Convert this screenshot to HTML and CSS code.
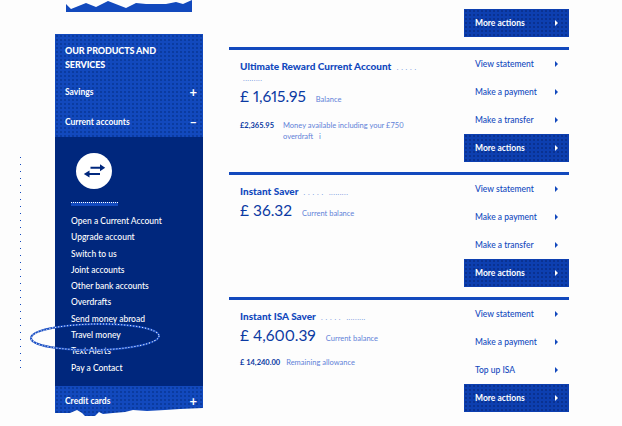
FILE: index.html
```html
<!DOCTYPE html>
<html lang="en">
<head>
<meta charset="utf-8">
<title>Your accounts</title>
<link rel="stylesheet" href="styles.css">
</head>
<body>
<div class="page">
  <div class="edge"></div>
  <aside class="side">
    <svg class="torn-top" viewBox="0 0 127 12" preserveAspectRatio="none"><path d="M1 4 L6 9 L21 3 L31 7 L43 1 L61 8 L71 3 L81 4 L101 4 L111 2 L118 4 L127 0 L127 12 L1 12 Z"/></svg>
    <nav class="menu">
      <h2 class="menu-title">OUR PRODUCTS AND SERVICES</h2>
      <div class="menu-row"><span>Savings</span><span class="sign">+</span></div>
      <div class="menu-row"><span>Current accounts</span><span class="sign">–</span></div>
      <div class="panel">
        <div class="disc">
          <svg viewBox="0 0 24 20" width="24" height="20"><path class="swap" d="M8.500 5.700H18V3.200L23.200 6.700L18 10.200V7.700H8.500Z M18 12H7.500V9.500L1.800 13L7.500 16.500V14H18Z"/></svg>
        </div>
        <div class="panel-name"></div>
        <ul class="links">
          <li>Open a Current Account</li>
          <li>Upgrade account</li>
          <li>Switch to us</li>
          <li>Joint accounts</li>
          <li>Other bank accounts</li>
          <li>Overdrafts</li>
          <li>Send money abroad</li>
          <li>Travel money</li>
          <li>Text Alerts</li>
          <li>Pay a Contact</li>
        </ul>
      </div>
      <div class="menu-row"><span>Credit cards</span><span class="sign">+</span></div>
      <svg class="torn-bottom" viewBox="0 0 148 10" preserveAspectRatio="none"><path d="M0 7 L15 7 L22 4 L27 7 L30 10 L40 10 L44 6 L48 8 L58 7 L70 6 L78 4 L92 5 L110 4 L125 3 L148 2 V10 H0 Z"/></svg>
    </nav>
    <svg class="ring" viewBox="0 0 132 30"><ellipse class="ring-blue" cx="66" cy="15" rx="64" ry="13" transform="rotate(-1 66 15)"/><ellipse class="ring-white" cx="66" cy="15" rx="64" ry="13" transform="rotate(-1 66 15)"/></svg>
  </aside>
  <main class="main">
    <div class="more-top"><a class="more">More actions<i class="tri"></i></a></div>

    <section class="account">
      <div class="info">
        <h3 class="name">Ultimate Reward Current Account <span class="faint">. . . . .</span> <span class="faint">.........</span></h3>
        <p class="balance"><b>£ 1,615.95</b><span>Balance</span></p>
        <p class="extra wide"><b>£2,365.95</b><span>Money available including your £750 overdraft &nbsp;&nbsp;i</span></p>
      </div>
      <div class="actions">
        <a class="act">View statement<i class="tri"></i></a>
        <a class="act">Make a payment<i class="tri"></i></a>
        <a class="act">Make a transfer<i class="tri"></i></a>
        <a class="more">More actions<i class="tri"></i></a>
      </div>
    </section>

    <section class="account">
      <div class="info">
        <h3 class="name">Instant Saver <span class="faint">. . . . .</span> <span class="faint">.........</span></h3>
        <p class="balance"><b>£ 36.32</b><span>Current balance</span></p>
      </div>
      <div class="actions">
        <a class="act">View statement<i class="tri"></i></a>
        <a class="act">Make a payment<i class="tri"></i></a>
        <a class="act">Make a transfer<i class="tri"></i></a>
        <a class="more">More actions<i class="tri"></i></a>
      </div>
    </section>

    <section class="account">
      <div class="info">
        <h3 class="name">Instant ISA Saver <span class="faint">. . . . .</span> <span class="faint">.........</span></h3>
        <p class="balance"><b>£ 4,600.39</b><span>Current balance</span></p>
        <p class="extra"><b>£ 14,240.00</b><span>Remaining allowance</span></p>
      </div>
      <div class="actions">
        <a class="act">View statement<i class="tri"></i></a>
        <a class="act">Make a payment<i class="tri"></i></a>
        <a class="act">Top up ISA<i class="tri"></i></a>
        <a class="more">More actions<i class="tri"></i></a>
      </div>
    </section>
  </main>
</div>
</body>
</html>
```

FILE: styles.css
```css
* { box-sizing: border-box; }
html, body { margin: 0; height: 100%; }
body {
  background: #fdfdfd;
  font-family: Lato, "Open Sans", sans-serif;
  color: #1249bd;
  overflow: hidden;
}
.page {
  position: relative;
  display: flex;
  gap: 26px;
  padding-left: 55px;
  height: 426px;
  overflow: hidden;
}
.edge {
  position: absolute;
  left: 20px;
  top: 157px;
  width: 1px;
  height: 212px;
  background-image: repeating-linear-gradient(to bottom, #1249bd 0 1px, transparent 1px 7px);
}
.side { position: relative; width: 148px; flex: none; }
.torn-top { display: block; width: 127px; height: 12px; margin-left: 10px; margin-bottom: 22px; fill: #1249bd; }
.menu {
  background-color: #1249bd;
  background-image: radial-gradient(circle, #0a3a9e 0.7px, transparent 0.9px);
  background-size: 4px 4px;
  color: #fff;
  position: relative;
}
.menu-title {
  margin: 0;
  padding: 10px 40px 0 10px;
  height: 43px;
  font-size: 9px;
  line-height: 14px;
  font-weight: 900;
  letter-spacing: -0.1px;
}
.menu-row {
  display: flex;
  justify-content: space-between;
  align-items: center;
  height: 30px;
  padding: 0 6px 0 10px;
  font-size: 8.500px;
  font-weight: 700;
}
.sign { font-size: 13px; line-height: 1; font-weight: 700; }
.panel { background: #00277d; height: 249px; padding: 16px 0 0 16px; }
.disc {
  width: 36px;
  height: 36px;
  margin-left: 5px;
  border-radius: 50%;
  background: #fff;
  display: flex;
  align-items: center;
  justify-content: center;
}
.swap { fill: #00277d; }
.panel-name {
  width: 47px;
  height: 4px;
  margin: 13px 0 0;
  border-top: 1px dotted #fff;
  background: #1249bd;
}
.links { list-style: none; margin: 7px 0 0; padding: 0; }
.links li { height: 16.300px; line-height: 16px; font-size: 8.500px; font-weight: 500; white-space: nowrap; }
.torn-bottom { position: absolute; left: 0; bottom: 0; width: 148px; height: 10px; fill: #fdfdfd; }
.ring {
  position: absolute;
  left: -26px;
  top: 322px;
  width: 132px;
  height: 30px;
  overflow: visible;
}
.ring-blue, .ring-white { fill: none; }
.ring-blue { stroke: #1a4fc4; stroke-width: 2; }
.ring-white { stroke: #fff; stroke-width: 1; stroke-dasharray: 1 2; }
.main { width: 340px; flex: none; }
.more-top { display: flex; justify-content: flex-end; padding-top: 9px; height: 47px; }
.account {
  display: flex;
  height: 125px;
  border-top: 3px solid #1249bd;
}
.info { flex: 1; min-width: 0; padding: 11px 35px 0 11px; }
.name { margin: 0; font-size: 10px; line-height: 10px; font-weight: 900; color: #1249bd; }
.faint { font-weight: 400; font-size: 7px; color: #6f8fdc; letter-spacing: 0.5px; margin-left: 3px; }
.balance { display: flex; align-items: baseline; gap: 10px; margin: 1px 0 0; font-size: 7.500px; color: #5f82d8; white-space: nowrap; }
.balance b { font-size: 15.500px; font-weight: 400; line-height: 24px; color: #0b3aa3; font-variant-numeric: proportional-nums; }
.extra { display: flex; margin: 10px 0 0; font-size: 7.500px; line-height: 11px; color: #5f82d8; }
.extra b { color: #0b3aa3; font-weight: 700; margin-right: 6px; flex: none; }
.extra.wide { margin-top: 12px; }
.extra.wide b { width: 43px; margin-right: 0; }
.actions { width: 105px; flex: none; }
.act {
  display: flex;
  justify-content: space-between;
  align-items: center;
  height: 28px;
  padding: 0 11px;
  font-size: 8.500px;
  font-weight: 500;
  color: #1249bd;
}
.more {
  display: flex;
  justify-content: space-between;
  align-items: center;
  width: 105px;
  height: 28px;
  padding: 0 11px;
  background-color: #0d3fb0;
  background-image: radial-gradient(circle, #0a3190 0.7px, transparent 0.9px);
  background-size: 4px 4px;
  color: #fff;
  font-size: 8.500px;
  font-weight: 700;
}
.tri {
  width: 0;
  height: 0;
  border-left: 3px solid currentColor;
  border-top: 3px solid transparent;
  border-bottom: 3px solid transparent;
}
```
